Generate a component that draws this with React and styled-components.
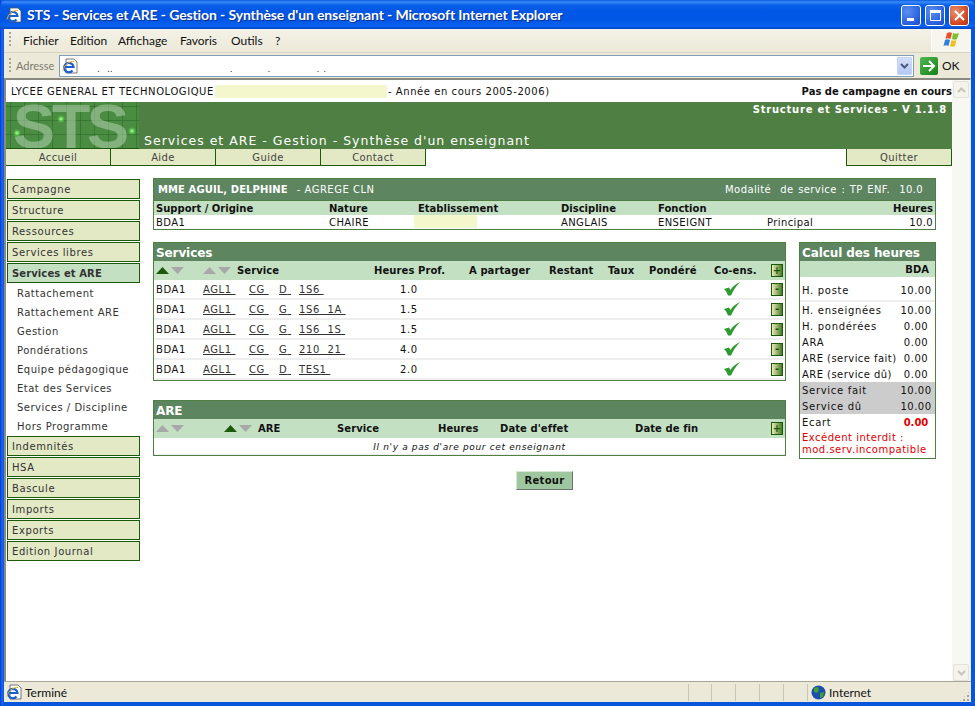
import React from "react";
import styled, { createGlobalStyle } from "styled-components";

const Global = createGlobalStyle`
  html, body { margin: 0; padding: 0; width: 975px; height: 706px; overflow: hidden; background: #0054e3; }
  * { box-sizing: border-box; }
  #root { width: 975px; height: 706px; }
`;

const V = `"DejaVu Sans", Verdana, sans-serif`;
const UI = `Lato, "Noto Sans", sans-serif`;
const GREEN_DARK = "#1a5a0a";
const PANEL = "#5c8560";
const BAND = "#c3e0c3";

const Win = styled.div`
  width: 975px; height: 706px; display: flex; flex-direction: column;
  background: linear-gradient(90deg, #0831d9 0, #166aee 2px, #0855dd 4px, #0855dd 100%);
  font-family: ${V}; overflow: hidden;
`;
const TitleBar = styled.div`
  height: 29px; flex: none; display: flex; align-items: center; padding: 0 6px 0 6px; gap: 5px;
  background: linear-gradient(180deg, #0a5be0 0, #3a8cf8 2px, #0b5fe8 5px, #0058e6 10px, #0055e5 20px, #0a62f0 26px, #0046c8 29px);
  border-radius: 7px 7px 0 0;
`;
const TitleText = styled.div`
  flex: 1; color: #fff; font: bold 14px ${UI}; letter-spacing: -0.12px; text-shadow: 1px 1px 0 #0a2f90; white-space: nowrap;
`;
const WinButtons = styled.div`display: flex; gap: 4px; margin-top: 1px;`;
const WinBtn = styled.div`
  width: 20px; height: 21px; border: 1px solid #fff; border-radius: 3px; display: flex; align-items: center; justify-content: center;
  background: ${p => p.$close ? "radial-gradient(circle at 30% 30%, #e8906c, #d0441f 70%, #b8300f)" : "radial-gradient(circle at 30% 30%, #5a8ff0, #2a5fdc 70%, #2048c0)"};
`;
const Frame = styled.div`
  flex: 1; margin: 0 4px 4px; display: flex; flex-direction: column; min-height: 0; background: #ece9d8;
`;
const MenuBar = styled.div`
  height: 24px; flex: none; display: flex; align-items: center; border-bottom: 1px solid #d8d4c4; padding-bottom: 1px;
  background: linear-gradient(180deg, #f4f2e8, #ece9d8);
`;
const Grip = styled.div`
  width: 2px; height: 16px; margin: 0 6px 0 5px; flex: none;
  background: repeating-linear-gradient(180deg, #a8a596 0 2px, transparent 2px 4px);
`;
const MenuItem = styled.span`
  font: 12px ${UI}; color: #111; width: ${p => p.$w}px; flex: none; white-space: nowrap;
`;
const FlagBox = styled.div`
  margin-left: auto; width: 40px; height: 23px; background: #f6f5ee; display: flex; align-items: center; justify-content: center; border-left: 1px solid #fff;
`;
const AddressBar = styled.div`
  height: 25px; flex: none; display: flex; align-items: center;
`;
const AddrLabel = styled.span`font: 11px ${UI}; color: #7c7a6e; width: 42px; margin-left: -1px; margin-right: 1px; white-space: nowrap;`;
const AddrField = styled.div`
  width: 855px; height: 22px; border: 1px solid #7f9db9; background: #fff; display: flex; align-items: center; padding-left: 2px; position: relative;
`;
const Combo = styled.div`
  margin-left: auto; width: 15px; height: 18px; margin-right: 1px; background: linear-gradient(180deg,#d4dff8,#b4c8f4); border: 1px solid #c4d4f4; display: flex; align-items: center; justify-content: center; border-radius: 1px;
`;
const Dots = styled.div`
  display: flex; align-self: flex-end; font: 9px ${V}; color: #333; height: 12px; line-height: 10px; margin-left: 10px;
`;
const Dot = styled.span`margin-left: ${p => p.$gap}px;`;
const GoBtn = styled.div`display: flex; align-items: center; gap: 4px; margin-left: 6px; font: 12px ${UI}; color: #111;`;
const GoIcon = styled.div`
  width: 18px; height: 18px; border-radius: 2px; background: linear-gradient(135deg, #50b850, #188018); display: flex; align-items: center; justify-content: center;
`;
const Viewport = styled.div`
  flex: 1; min-height: 0; display: flex; border-top: 2px solid #8a8a80; border-left: 2px solid #8a8a80; border-right: 1px solid #e8e8e0; background: #fff;
`;
const Scroll = styled.div`
  width: 18px; flex: none; background: #f8f8f2; display: flex; flex-direction: column; justify-content: space-between; padding: 1px 1px 0 1px;
`;
const ScrollBtn = styled.div`
  width: 16px; height: 17px; border: 1px solid #e4e2d8; border-radius: 2px; background: #f4f3ec; display: flex; align-items: center; justify-content: center;
`;
const Page = styled.div`flex: 1; min-width: 0; display: flex; flex-direction: column; background: #fff;`;

const SchoolRow = styled.div`
  height: 22px; flex: none; display: flex; align-items: center; padding-left: 5px; font-size: 10px; color: #111; letter-spacing: 0.57px; white-space: nowrap;
`;
const Blank = styled.span`
  display: inline-block; background: #f4f7cc; height: 13px; width: ${p => p.$w}px; margin: 0 1px 0 1px;
`;
const NoCampaign = styled.b`margin-left: auto; letter-spacing: 0;`;
const Banner = styled.div`
  height: 47px; flex: none; background: #4f7f43; display: flex; position: relative; color: #fff;
`;
const LogoArt = styled.svg`display: block; width: 133px; height: 47px; flex: none;`;
const PageTitle = styled.div`
  align-self: flex-end; margin-left: 5px; font-size: 12.5px; letter-spacing: 1px; line-height: 16px; white-space: nowrap;
`;
const Version = styled.div`
  position: absolute; right: 5px; top: 0; font-size: 10px; font-weight: bold; letter-spacing: 0.77px; line-height: 15px;
`;
const Tabs = styled.div`display: flex; height: 17px; flex: none;`;
const Tab = styled.div`
  width: ${p => p.$w ?? 105}px; height: 17px; background: #e3e9c5; border-right: 1px solid ${GREEN_DARK}; border-bottom: 1px solid ${GREEN_DARK};
  ${p => p.$left ? `border-left: 1px solid ${GREEN_DARK}; margin-left: auto;` : ""}
  font-size: 10px; letter-spacing: 0.4px; color: #444; text-align: center; line-height: 17px;
`;
const Body = styled.div`flex: 1; min-height: 0; display: flex; align-items: flex-start; padding: 12px 0 0 1px;`;
const Sidebar = styled.nav`width: 133px; flex: none; margin-top: 1px; display: flex; flex-direction: column;`;
const SideItem = styled.div`
  height: 20px; margin-bottom: 1px; border: 1px solid ${GREEN_DARK}; background: ${p => p.$active ? BAND : "#e3e9c5"};
  font-size: 10px; color: #333; line-height: 20px; padding-left: 4px; font-weight: ${p => p.$active ? "bold" : "normal"};
  letter-spacing: ${p => p.$active ? "0.1px" : "0.6px"};
`;
const SubList = styled.div`display: flex; flex-direction: column; margin-top: -1px; padding: 1px 0 0;`;
const SubItem = styled.div`
  height: 19px; padding-left: 10px; font-size: 10px; letter-spacing: 0.5px; color: #333; line-height: 19px;
`;
const Main = styled.div`margin-left: 13px; width: 783px; flex: none; display: flex; flex-direction: column;`;
const Panel = styled.section`border: 1px solid #4f7f43; background: #fff;`;
const InfoHead = styled.div`
  height: 22px; background: ${PANEL}; color: #fff; display: flex; align-items: center; padding: 0 12px 0 4px; font-size: 10px; letter-spacing: 0.5px; white-space: nowrap; border-bottom: 1px solid #4f7f43;
`;
const InfoName = styled.b`letter-spacing: 0.1px; margin-right: 9px;`;
const InfoRight = styled.span`margin-left: auto; letter-spacing: 0.4px; word-spacing: 1px;`;
const infoCols = "173px 89px 143px 97px 109px 1fr";
const InfoBand = styled.div`
  display: grid; grid-template-columns: ${infoCols}; height: 14px; background: ${BAND}; padding: 0 2px; font-size: 10px; font-weight: bold; line-height: 16px; color: #111; white-space: nowrap; letter-spacing: 0;
`;
const InfoRow = styled.div`
  display: grid; grid-template-columns: ${infoCols}; height: 14px; padding: 0 2px; font-size: 10px; line-height: 16px; color: #111; letter-spacing: 0.4px; white-space: nowrap;
`;
const Right = styled.span`text-align: right; display: flex; justify-content: space-between;`;
const InfoBlank = styled.span`display: inline-block; height: 13px; width: 63px; background: #f4f7cc; margin-left: -4px;`;
const Columns = styled.div`display: flex; align-items: flex-start; margin-top: 12px; gap: 13px;`;
const LeftCol = styled.div`width: 633px; flex: none; display: flex; flex-direction: column; gap: 19px;`;
const PanelTitle = styled.h2`
  margin: 0; height: 18px; background: ${PANEL}; color: #fff; font-size: 12px; font-weight: bold; letter-spacing: -0.1px; line-height: 20px; padding-left: 2px;
`;
const ServCols = "47px 171px 95px 80px 59px 41px 65px 57px 15px";
const HeadRow = styled.div`
  display: grid; height: 19px; align-items: center; background: ${BAND}; padding-left: 2px; font-size: 10px; font-weight: bold; color: #111; letter-spacing: 0.08px; white-space: nowrap;
  grid-template-columns: ${p => p.$cols};
`;
const Row = styled.div`
  display: grid; height: 20px; align-items: center; padding-left: 2px; font-size: 10px; color: #111; letter-spacing: 0.6px; border-bottom: 2px solid #eeeeee; white-space: nowrap;
  grid-template-columns: ${ServCols};
`;
const ServiceCell = styled.div`display: grid; grid-template-columns: 46px 30px 20px 1fr;`;
const HoursCell = styled.span`padding-left: 26px;`;
const Link = styled.span`text-decoration: underline; color: #333; white-space: pre;`;
const Sorts = styled.div`display: flex; gap: 2px; align-items: center;`;
const SortHead = styled.div`display: flex; align-items: center; gap: 6px;`;
const SmallBtnBox = styled.div`
  width: 12px; height: 13px; border: 1px solid ${GREEN_DARK}; background: linear-gradient(90deg, #e8ecb8, #4a7a28);
  display: flex; align-items: center; justify-content: center; color: ${GREEN_DARK}; font: bold 10px/10px ${V}; letter-spacing: 0;
`;
const Empty = styled.div`
  height: 17px; text-align: center; font-style: italic; font-size: 9px; letter-spacing: 0.65px; color: #111; line-height: 18px; border-bottom: 1px solid #eee;
`;
const AreCols = "68px 34px 79px 101px 62px 135px 136px 15px";
const Actions = styled.div`display: flex; justify-content: center; margin-top: 12px;`;
const BtnRetour = styled.button`
  width: 57px; height: 19px; padding: 0; font: bold 10px ${V}; letter-spacing: 0.3px; color: #111; background: #9fc79f;
  border: 1px solid; border-color: #d8e8d8 #707070 #707070 #d8e8d8;
`;
const CalcPanel = styled(Panel)`width: 137px; flex: none; height: 217px; display: flex; flex-direction: column;`;
const CalcBand = styled.div`height: 16px; background: ${BAND}; text-align: right; padding-right: 6px; font: bold 10px/17px ${V}; color: #111;`;
const CalcRow = styled.div`
  height: ${p => p.$h ?? 16}px; flex: none; display: grid; grid-template-columns: 1fr 36px; align-items: center; padding: ${p => p.$pt ?? 0}px 1px 0 2px; font-size: 10px; letter-spacing: ${p => p.$tight ? "0.45px" : "0.7px"}; color: #111; white-space: nowrap;
  background: ${p => p.$gray ? "#cccccc" : "transparent"};
  ${p => p.$line ? "border-bottom: 2px solid #eee;" : ""}
`;
const CalcVal = styled.span`text-align: center; letter-spacing: 0.5px; ${p => p.$red ? "color: #e00000; font-weight: bold; letter-spacing: 0;" : ""}`;
const CalcNote = styled.div`color: #e00000; font-size: 10px; letter-spacing: 0.5px; line-height: 12px; padding: 2px 0 0 2px; white-space: nowrap;`;
const Status = styled.div`
  height: 21px; flex: none; display: flex; align-items: center; font: 12px ${UI}; color: #111; padding-left: 2px; gap: 3px; border-top: 1px solid #a8a596;
  background: #ece9d8;
`;
const StatusCell = styled.div`width: 24px; height: 17px; border-right: 1px solid #c8c5b4; flex: none; &:first-child { border-left: 1px solid #c8c5b4; }`;
const StatusZone = styled.div`margin-left: auto; display: flex; align-items: center; height: 100%;`;
const StatusNet = styled.div`display: flex; align-items: center; gap: 3px; width: 163px; padding-left: 3px; height: 100%;`;
const SizeGrip = styled.div`
  margin-left: auto; align-self: flex-end; width: 11px; height: 11px; margin-right: 1px;
  background: radial-gradient(circle at 1px 1px, #a8a596 1px, transparent 1.2px) 0 0 / 4px 4px;
  clip-path: polygon(100% 0, 100% 100%, 0 100%);
`;

const IE = ({ size = 16 }) => (
  <svg width={size} height={size} viewBox="0 0 16 16">
    <path d="M4 1h8l3 3v11H4z" fill="#fff" stroke="#555" strokeWidth=".8" />
    <path d="M3 9h8.500A4.700 4.700 0 1 0 10.500 12.500" fill="none" stroke="#1a5fd0" strokeWidth="2.200" />
    <path d="M1 12.500C2 7 7 3 12 3.500" fill="none" stroke="#e8b020" strokeWidth="1" />
  </svg>
);
const Flag = () => (
  <svg width="22" height="20" viewBox="0 0 22 20">
    <path d="M6 3c2-1 3-1 5 0l-1.500 6c-2-1-3-1-5 0z" fill="#e8502c" />
    <path d="M12 3c2 1 4 1 6 0l-2 6c-2 1-3 1-5 0z" fill="#7cc030" />
    <path d="M4 10c2-1 3-1 5 0l-1.500 6c-2-1-3-1-5 0z" fill="#3080e0" />
    <path d="M10.500 10c2 1 3 1 5 0l-1.500 6c-2 1-3 1-5 0z" fill="#f0c020" />
  </svg>
);
const Tri = ({ up, on }) => (
  <svg width="13" height="7" viewBox="0 0 13 7">
    <path d={up ? "M0 7L6.500 0 13 7z" : "M0 0L13 0 6.500 7z"} fill={on ? GREEN_DARK : "#a8a8a8"} />
  </svg>
);
const Check = () => (
  <svg width="16" height="14" viewBox="0 0 16 14" style={{ display: "block", marginLeft: 10 }}>
    <path d="M0 7l5-1.500L6.500 8C9 4 12 2 16 0 12 4 9 9 7 13.500H4C3 11 2 9 0 7z" fill="#2f9a2f" />
  </svg>
);
const Chev = ({ c = "#4a5a80", up }) => (
  <svg width="9" height="6" viewBox="0 0 9 6">
    <path d={up ? "M1 5l3.500-3.500L8 5" : "M1 1l3.500 3.500L8 1"} fill="none" stroke={c} strokeWidth="2" />
  </svg>
);
const gridX = Array.from({ length: 10 }, (_, i) => 4 + i * 14);
const gridY = Array.from({ length: 4 }, (_, i) => 4 + i * 14);
const Logo = () => (
  <LogoArt viewBox="0 0 133 47">
    <rect width="133" height="47" fill="#4a8c42" />
    {gridX.map(x => <rect key={x} x={x} width="1" height="47" fill="#2f6a2c" opacity=".6" />)}
    {gridY.map(y => <rect key={y} y={y} width="133" height="1" fill="#2f6a2c" opacity=".6" />)}
    <text x="7" y="46" fontFamily="Liberation Sans, sans-serif" fontWeight="bold" fontSize="63" textLength="116" lengthAdjust="spacing" fill="#bed7b9" fillOpacity=".5">STS</text>
    {[[55, 17], [11, 31], [126, 29]].map(([cx, cy]) => (
      <g key={cx}><circle cx={cx} cy={cy} r="3.500" fill="#60d050" opacity=".5" /><circle cx={cx} cy={cy} r="1.800" fill="#8cf07c" /></g>
    ))}
    <rect y="46" width="133" height="1" fill={GREEN_DARK} />
  </LogoArt>
);

const rows = [["D", "1S6 "], ["G", "1S6  1A "], ["G", "1S6  1S "], ["G", "210  21 "], ["D", "TES1 "]];
const hours = ["1.0", "1.5", "1.5", "4.0", "2.0"];
const top = ["Campagne", "Structure", "Ressources", "Services libres"];
const subs = ["Rattachement", "Rattachement ARE", "Gestion", "Pondérations", "Equipe pédagogique", "Etat des Services", "Services / Discipline", "Hors Programme"];
const bottom = ["Indemnités", "HSA", "Bascule", "Imports", "Exports", "Edition Journal"];
const menus = [["Fichier", 47], ["Edition", 48], ["Affichage", 62], ["Favoris", 51], ["Outils", 44], ["?", 12]];

export default function App() {
  return (
    <Win>
      <Global />
      <TitleBar>
        <IE />
        <TitleText>STS - Services et ARE - Gestion - Synthèse d'un enseignant - Microsoft Internet Explorer</TitleText>
        <WinButtons>
          <WinBtn><svg width="13" height="13" viewBox="0 0 13 13"><rect x="2" y="9" width="7" height="3" fill="#fff" /></svg></WinBtn>
          <WinBtn><svg width="13" height="13" viewBox="0 0 13 13"><path d="M1.500 3.500h10v8h-10z" fill="none" stroke="#fff" /><rect x="1" y="1" width="11" height="2" fill="#fff" /></svg></WinBtn>
          <WinBtn $close><svg width="13" height="13" viewBox="0 0 13 13"><path d="M2 2l9 9M11 2l-9 9" stroke="#fff" strokeWidth="2" /></svg></WinBtn>
        </WinButtons>
      </TitleBar>
      <Frame>
        <MenuBar>
          <Grip />
          <MenuItem $w={6} />
          {menus.map(([m, w]) => <MenuItem key={m} $w={w}>{m}</MenuItem>)}
          <FlagBox><Flag /></FlagBox>
        </MenuBar>
        <AddressBar>
          <Grip />
          <AddrLabel>Adresse</AddrLabel>
          <AddrField>
            <IE />
            <Dots>
              {[9, 7, 0, 117, 35, 46, 4].map((g, i) => <Dot key={i} $gap={g}>.</Dot>)}
            </Dots>
            <Combo><Chev /></Combo>
          </AddrField>
          <GoBtn>
            <GoIcon><svg width="14" height="14" viewBox="0 0 14 14"><path d="M1 7h10M7 2l5 5-5 5" fill="none" stroke="#fff" strokeWidth="2" /></svg></GoIcon>
            OK
          </GoBtn>
        </AddressBar>
        <Viewport>
          <Page>
            <SchoolRow>
              LYCEE GENERAL ET TECHNOLOGIQUE<Blank $w={172} /> - Année en cours 2005-2006)
              <NoCampaign>Pas de campagne en cours</NoCampaign>
            </SchoolRow>
            <Banner>
              <Logo />
              <PageTitle>Services et ARE - Gestion - Synthèse d'un enseignant</PageTitle>
              <Version>Structure et Services - V 1.1.8</Version>
            </Banner>
            <Tabs>
              <Tab>Accueil</Tab><Tab>Aide</Tab><Tab>Guide</Tab><Tab>Contact</Tab>
              <Tab $left $w={106}>Quitter</Tab>
            </Tabs>
            <Body>
              <Sidebar>
                {top.map(t => <SideItem key={t}>{t}</SideItem>)}
                <SideItem $active>Services et ARE</SideItem>
                <SubList>{subs.map(s => <SubItem key={s}>{s}</SubItem>)}</SubList>
                {bottom.map(t => <SideItem key={t}>{t}</SideItem>)}
              </Sidebar>
              <Main>
                <Panel>
                  <InfoHead>
                    <InfoName>MME AGUIL, DELPHINE</InfoName> - AGREGE CLN
                    <InfoRight>Modalité&nbsp; de service : TP ENF.&nbsp; 10.0</InfoRight>
                  </InfoHead>
                  <InfoBand>
                    <span>Support / Origine</span><span>Nature</span><span>Etablissement</span><span>Discipline</span><span>Fonction</span><Right><span />Heures</Right>
                  </InfoBand>
                  <InfoRow>
                    <span>BDA1</span><span>CHAIRE</span><span><InfoBlank /></span><span>ANGLAIS</span><span>ENSEIGNT</span>
                    <Right><span>Principal</span><span>10.0</span></Right>
                  </InfoRow>
                </Panel>
                <Columns>
                  <LeftCol>
                    <Panel>
                      <PanelTitle>Services</PanelTitle>
                      <HeadRow $cols={ServCols}>
                        <Sorts><Tri up on /><Tri /></Sorts>
                        <SortHead><Sorts><Tri up /><Tri /></Sorts>Service</SortHead>
                        <span>Heures Prof.</span><span>A partager</span><span>Restant</span><span>Taux</span><span>Pondéré</span><span>Co-ens.</span>
                        <SmallBtnBox>+</SmallBtnBox>
                      </HeadRow>
                      {rows.map((r, i) => (
                        <Row key={i}>
                          <span>BDA1</span>
                          <ServiceCell><Link>AGL1 </Link><Link>CG </Link><Link>{r[0]} </Link><Link>{r[1]}</Link></ServiceCell>
                          <HoursCell>{hours[i]}</HoursCell>
                          <span /><span /><span /><span />
                          <Check />
                          <SmallBtnBox>-</SmallBtnBox>
                        </Row>
                      ))}
                    </Panel>
                    <Panel>
                      <PanelTitle>ARE</PanelTitle>
                      <HeadRow $cols={AreCols}>
                        <Sorts><Tri up /><Tri /></Sorts>
                        <Sorts><Tri up on /><Tri /></Sorts>
                        <span>ARE</span><span>Service</span><span>Heures</span><span>Date d'effet</span><span>Date de fin</span>
                        <SmallBtnBox>+</SmallBtnBox>
                      </HeadRow>
                      <Empty>Il n'y a pas d'are pour cet enseignant</Empty>
                    </Panel>
                  </LeftCol>
                  <CalcPanel>
                    <PanelTitle>Calcul des heures</PanelTitle>
                    <CalcBand>BDA</CalcBand>
                    <CalcRow $h={25} $pt={3} $line><span>H. poste</span><CalcVal>10.00</CalcVal></CalcRow>
                    <CalcRow><span>H. enseignées</span><CalcVal>10.00</CalcVal></CalcRow>
                    <CalcRow><span>H. pondérées</span><CalcVal>0.00</CalcVal></CalcRow>
                    <CalcRow><span>ARA</span><CalcVal>0.00</CalcVal></CalcRow>
                    <CalcRow $tight><span>ARE (service fait)</span><CalcVal>0.00</CalcVal></CalcRow>
                    <CalcRow $tight><span>ARE (service dû)</span><CalcVal>0.00</CalcVal></CalcRow>
                    <CalcRow $gray><span>Service fait</span><CalcVal>10.00</CalcVal></CalcRow>
                    <CalcRow $gray><span>Service dû</span><CalcVal>10.00</CalcVal></CalcRow>
                    <CalcRow><span>Ecart</span><CalcVal $red>0.00</CalcVal></CalcRow>
                    <CalcNote>Excédent interdit :<br />mod.serv.incompatible</CalcNote>
                  </CalcPanel>
                </Columns>
                <Actions><BtnRetour>Retour</BtnRetour></Actions>
              </Main>
            </Body>
          </Page>
          <Scroll>
            <ScrollBtn><Chev c="#c8c6b8" up /></ScrollBtn>
            <ScrollBtn><Chev c="#c8c6b8" /></ScrollBtn>
          </Scroll>
        </Viewport>
        <Status>
          <IE />
          <span>Terminé</span>
          <StatusZone>
            <StatusCell /><StatusCell /><StatusCell /><StatusCell /><StatusCell />
            <StatusNet>
              <svg width="15" height="15" viewBox="0 0 15 15"><circle cx="7.500" cy="7.500" r="7" fill="#1a4fb0" /><path d="M3 3l4-1 1 3-2 3-3-1zM9 8l4-1-1 5-3 1z" fill="#40a030" /></svg>
              Internet
              <SizeGrip />
            </StatusNet>
          </StatusZone>
        </Status>
      </Frame>
    </Win>
  );
}
